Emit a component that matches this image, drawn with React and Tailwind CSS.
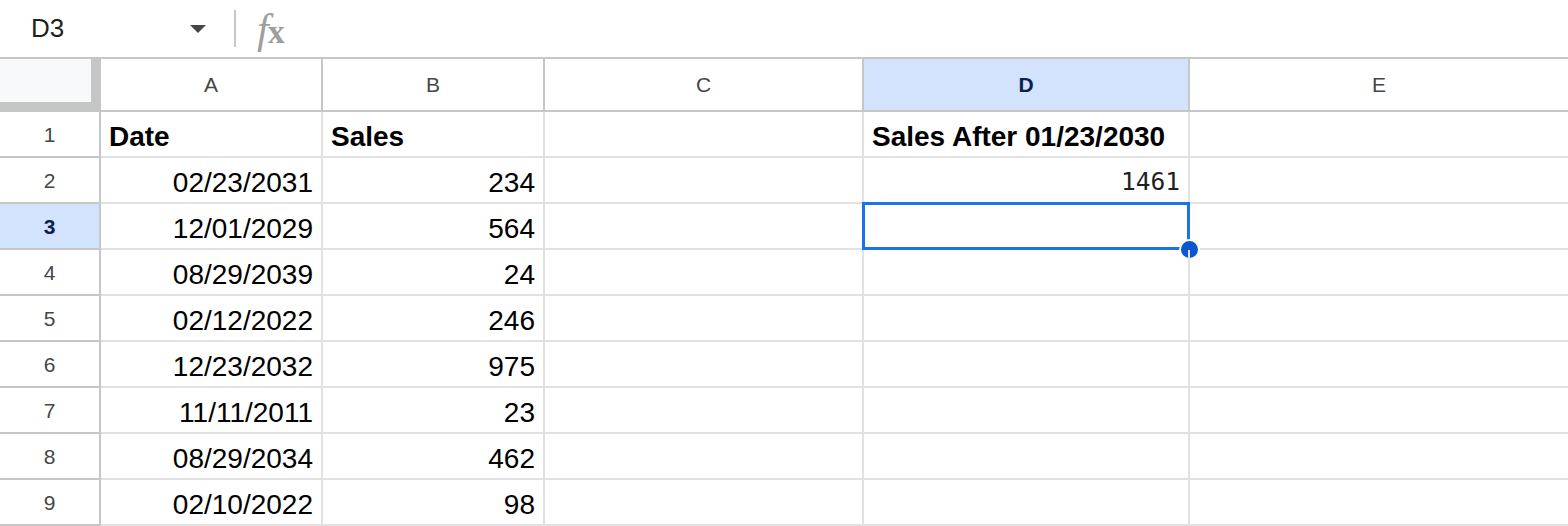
import React from 'react';

const cols = [
  { key: 'A', w: 'w-[222px]' },
  { key: 'B', w: 'w-[222px]' },
  { key: 'C', w: 'w-[319px]' },
  { key: 'D', w: 'w-[326px]' },
  { key: 'E', w: 'flex-1' },
];

const rows = [
  { date: 'Date', sales: 'Sales', d: 'Sales After 01/23/2030', header: true },
  { date: '02/23/2031', sales: '234', d: '1461' },
  { date: '12/01/2029', sales: '564', d: '' },
  { date: '08/29/2039', sales: '24', d: '' },
  { date: '02/12/2022', sales: '246', d: '' },
  { date: '12/23/2032', sales: '975', d: '' },
  { date: '11/11/2011', sales: '23', d: '' },
  { date: '08/29/2034', sales: '462', d: '' },
  { date: '02/10/2022', sales: '98', d: '' },
];

function FormulaBar() {
  return (
    <div className="flex items-center h-[59px] border-b-2 border-[#c4c7c5] bg-white">
      <div className="w-[190px] pl-[31px] text-[26px] text-[#1f1f1f]">D3</div>
      <svg width="16" height="10" viewBox="0 0 16 10" className="mt-[1px]">
        <polygon points="0,1 16,1 8,9" fill="#444746" />
      </svg>
      <div className="ml-[28px] w-[2px] h-[37px] bg-[#c7c7c7]" />
      <div
        className="ml-[21px] flex items-baseline text-[#9e9e9e] leading-none"
        style={{ fontFamily: '"Liberation Serif", "DejaVu Serif", serif' }}
      >
        <span className="text-[42px] italic">f</span>
        <span className="text-[34px] font-bold -ml-[1px]">x</span>
      </div>
    </div>
  );
}

function ColumnHeader() {
  return (
    <div className="flex h-[53px] border-b-2 border-[#c4c7c5]">
      <div className="w-[101px] shrink-0 bg-[#c4c7c5] pr-[10px] pb-[8px]">
        <div className="w-full h-full bg-[#f8f9fa]" />
      </div>
      {cols.map((c) => (
        <div
          key={c.key}
          className={`${c.w} shrink-0 flex items-center justify-center text-[21px] ${
            c.key === 'D' ? 'bg-[#d3e3fd] text-[#0b1f4b] font-bold' : 'text-[#444746]'
          } ${c.key === 'E' ? '' : 'border-r-2 border-[#c4c7c5]'}`}
        >
          {c.key}
        </div>
      ))}
    </div>
  );
}

const cellBase = 'h-[46px] shrink-0 border-b-2 border-r-2 border-[#e1e1e1]';

function Row({ row, idx }) {
  const n = idx + 1;
  const sel = n === 3;
  const textCell = `${cellBase} w-[222px] flex items-center px-[8px] pt-[5px] text-[28px] text-black ${
    row.header ? 'font-bold justify-start' : 'justify-end'
  }`;
  return (
    <div className="flex">
      <div
        className={`h-[46px] w-[101px] shrink-0 flex items-center justify-center pt-[2px] text-[21px] border-b-2 border-r-2 border-[#c4c7c5] ${
          sel ? 'bg-[#d3e3fd] text-[#0b1f4b] font-bold' : 'text-[#444746]'
        }`}
      >
        {n}
      </div>
      <div className={textCell}>{row.date}</div>
      <div className={textCell}>{row.sales}</div>
      <div className={`${cellBase} w-[319px]`} />
      <div
        className={`${cellBase} relative w-[326px] flex items-center px-[8px] pt-[5px] ${
          row.header ? 'font-bold justify-start text-[28px]' : 'justify-end'
        }`}
      >
        {row.header ? (
          row.d
        ) : (
          <span
            className="text-[24.5px] text-[#1f1f1f]"
            style={{ fontFamily: '"DejaVu Sans Mono", "Liberation Mono", monospace' }}
          >
            {row.d}
          </span>
        )}
        {sel && (
          <>
            <div className="absolute -top-[2px] -left-[2px] -right-[2px] -bottom-[2px] border-[3px] border-[#1a73e8]" />
            <div className="absolute -right-[12px] -bottom-[12px] w-[21px] h-[21px] rounded-full bg-[#0b57d0] border-2 border-white" />
          </>
        )}
      </div>
      <div className="h-[46px] flex-1 border-b-2 border-[#e1e1e1]" />
    </div>
  );
}

export default function App() {
  return (
    <div
      className="w-[1568px] h-[526px] overflow-hidden bg-white"
      style={{ fontFamily: '"Liberation Sans", Arial, sans-serif' }}
    >
      <FormulaBar />
      <ColumnHeader />
      {rows.map((r, i) => (
        <Row key={i} row={r} idx={i} />
      ))}
    </div>
  );
}
